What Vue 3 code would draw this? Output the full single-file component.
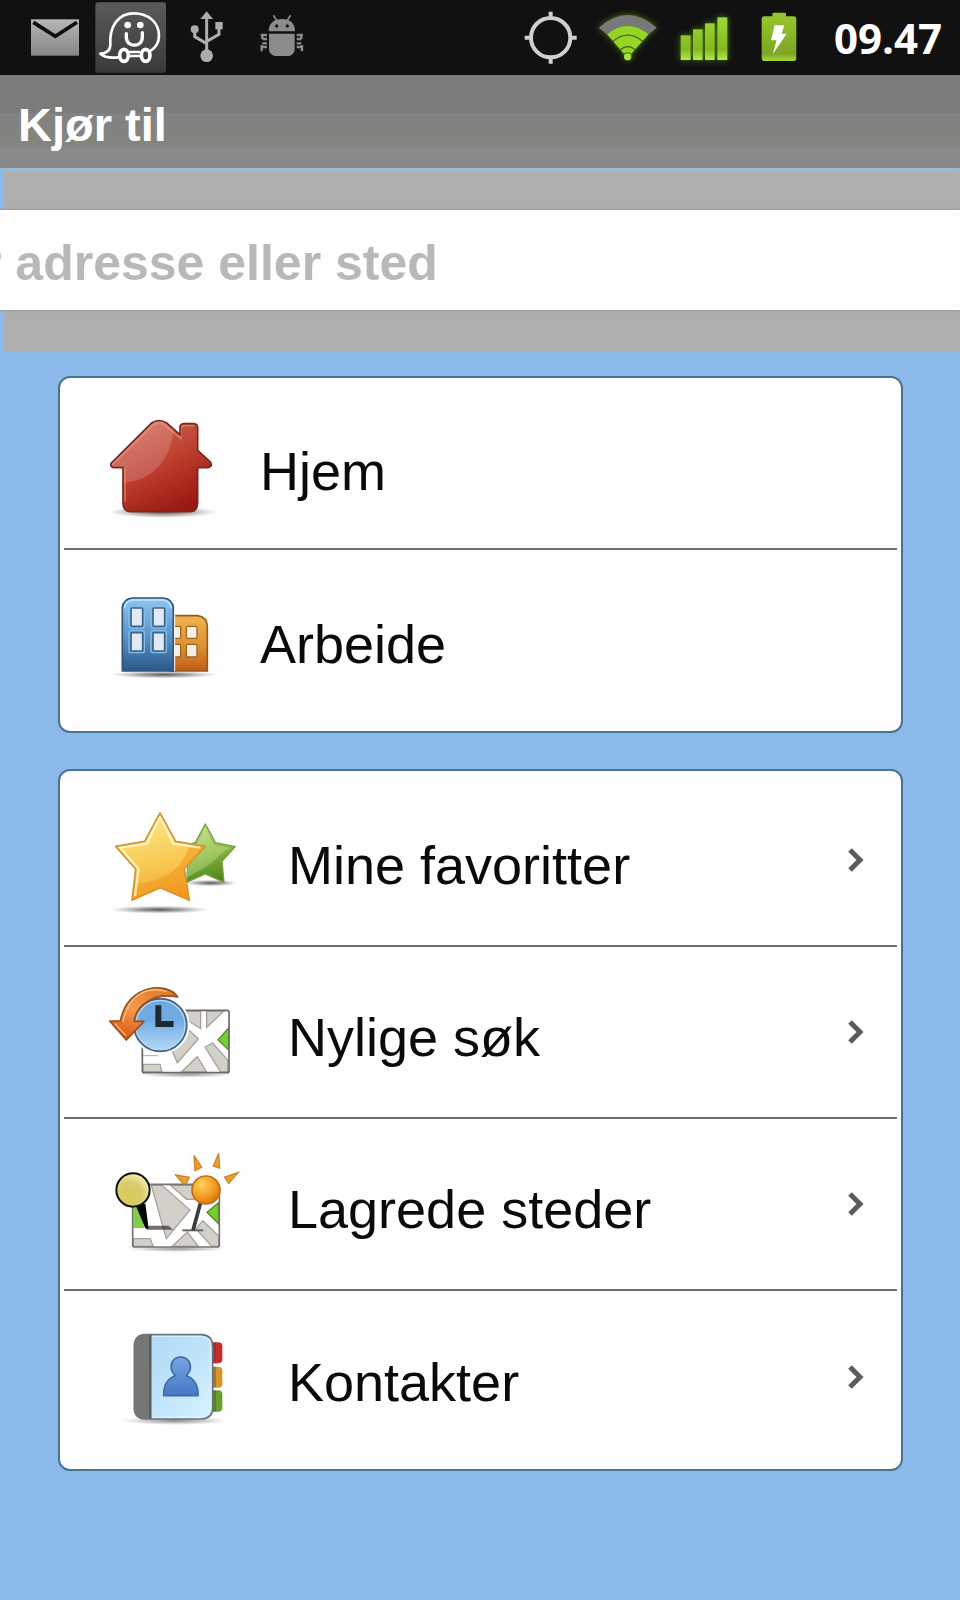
<script setup>
const places = ['Hjem', 'Arbeide']
const lists = ['Mine favoritter', 'Nylige søk', 'Lagrede steder', 'Kontakter']
</script>

<template>
  <div class="screen">
    <header class="status">
      <div class="status-group">
        <svg class="w48" viewBox="94 0 144 225" aria-hidden="true">
          <defs>
            <linearGradient id="mail" x1="0" y1="0" x2="0" y2="1">
              <stop offset="0" stop-color="#b5b5b5" /><stop offset="1" stop-color="#868686" />
            </linearGradient>
          </defs>
          <rect x="94" y="58" width="144" height="109" fill="url(#mail)" />
          <path d="M101 67L167 109L232 67" fill="none" stroke="#0c0c0c" stroke-width="11" />
        </svg>
        <svg class="w72" viewBox="288 0 216 225" aria-hidden="true">
          <defs>
            <linearGradient id="tile" x1="0" y1="0" x2="0" y2="1">
              <stop offset="0" stop-color="#5a5a5a" /><stop offset="1" stop-color="#3a3a3a" />
            </linearGradient>
          </defs>
          <rect x="289" y="7" width="212" height="211" rx="8" fill="url(#tile)" />
          <g fill="none" stroke="#fff" stroke-width="9" stroke-linecap="round" stroke-linejoin="round">
            <path d="M358 172C338 174 316 172 304 161C322 160 333 153 334 137C330 78 358 40 405 40C449 40 480 68 480 107C480 128 471 142 454 153M393 156H421M393 168H421" stroke-width="8" />
            <ellipse cx="375" cy="166" rx="13" ry="18" stroke-width="11" />
            <ellipse cx="440" cy="166" rx="13" ry="18" stroke-width="11" />
            <path d="M382 101V112C382 143 430 143 430 112V98" stroke-width="10" />
          </g>
          <circle cx="386" cy="75" r="10" fill="#fff" /><circle cx="424" cy="75" r="10" fill="#fff" />
        </svg>
        <svg class="w48" viewBox="552 0 144 225" aria-hidden="true">
          <g fill="#adadad">
            <path d="M623 34L642 57H604Z" /><circle cx="623" cy="167" r="19" />
            <circle cx="587" cy="88" r="12" /><rect x="649" y="66" width="22" height="22" />
          </g>
          <g fill="none" stroke="#adadad" stroke-width="9">
            <path d="M623 52V160M587 95V110L623 131M660 85V103L623 124" />
          </g>
        </svg>
        <svg class="w72" viewBox="744 0 216 225" aria-hidden="true">
          <g fill="#8c8c8c">
            <path d="M809 94C809 70 824 57 849 57S888 70 888 94Z" />
            <path d="M810 101H887V147C887 160 878 168 866 168H832C820 168 810 160 810 147Z" />
          </g>
          <path d="M823 46L833 61M875 46L865 61" fill="none" stroke="#8c8c8c" stroke-width="5" />
          <path d="M785 105H804M790 102V117M790 117H804M790 130H804M788 135V154M788 141H804M912 105H893M907 102V117M907 117H893M907 130H893M909 135V154M909 141H893" fill="none" stroke="#8c8c8c" stroke-width="7" />
          <circle cx="833" cy="78" r="5" fill="#151515" /><circle cx="865" cy="78" r="5" fill="#151515" />
        </svg>
      </div>
      <div class="status-group">
        <svg class="w64" viewBox="60 0 192 225" aria-hidden="true">
          <g fill="none" stroke="#cfcfcf" stroke-width="12">
            <circle cx="152" cy="113" r="59" />
            <path d="M152 35V54M152 172V191M74 113H93M211 113H230" />
          </g>
        </svg>
        <svg class="w72 glow" viewBox="276 0 216 225" aria-hidden="true">
          <path d="M296 83Q383 7 470 83L446 103Q383 53 321 103Z" fill="#787878" />
          <path d="M321 103Q383 53 446 103L391 165H375Z" fill="#96d528" />
          <circle cx="383" cy="170" r="11" fill="#a6e53a" />
          <path d="M339 124Q383 87 428 124M361 149Q383 131 406 149" fill="none" stroke="#3d6410" stroke-width="4" />
          <path d="M372 161Q383 155 394 161" fill="none" stroke="#3d6410" stroke-width="3" />
        </svg>
        <svg class="w64 glow" viewBox="516 0 192 225" aria-hidden="true">
          <defs>
            <linearGradient id="bars" gradientUnits="userSpaceOnUse" x1="0" y1="50" x2="0" y2="180">
              <stop offset="0" stop-color="#9edb36" /><stop offset="0.75" stop-color="#83b91f" /><stop offset="1" stop-color="#b2e94c" />
            </linearGradient>
          </defs>
          <g fill="url(#bars)">
            <rect x="542" y="106" width="30" height="74" /><rect x="579" y="88" width="29" height="92" />
            <rect x="615" y="70" width="29" height="110" /><rect x="652" y="52" width="30" height="128" />
          </g>
        </svg>
        <svg class="w72" viewBox="732 0 216 225" aria-hidden="true">
          <defs>
            <linearGradient id="cell" x1="0" y1="0" x2="0" y2="1">
              <stop offset="0" stop-color="#96c92d" /><stop offset="0.85" stop-color="#7da524" /><stop offset="1" stop-color="#a6da3e" />
            </linearGradient>
          </defs>
          <path d="M817 49V42Q817 38 822 38H853Q858 38 858 42V49H881Q889 49 889 57V175Q889 183 881 183H793Q785 183 785 175V57Q785 49 793 49Z" fill="url(#cell)" />
          <path d="M824 76H853L845 101H860L818 163L830 121H813Z" fill="#fff" />
        </svg>
        <time class="clock">09.47</time>
      </div>
    </header>

    <h1 class="title">Kjør til</h1>

    <form class="search" @submit.prevent>
      <input class="search-field" type="text" placeholder="r adresse eller sted" aria-label="adresse eller sted" />
    </form>

    <main class="content">
      <nav class="card">
        <a v-for="(name, i) in places" :key="name" class="row" href="#">
          <svg v-if="i === 0" class="icon" viewBox="45 -6 420 390" aria-hidden="true">
            <defs>
              <linearGradient id="roof" x1="0.2" y1="0" x2="0.75" y2="1">
                <stop offset="0" stop-color="#cf6a55" /><stop offset="0.5" stop-color="#bd3e2e" /><stop offset="1" stop-color="#96150f" />
              </linearGradient>
              <radialGradient id="shade">
                <stop offset="0" stop-color="#444" stop-opacity="0.9" /><stop offset="0.5" stop-color="#777" stop-opacity="0.6" /><stop offset="1" stop-color="#999" stop-opacity="0" />
              </radialGradient>
              <clipPath id="house-clip">
                <path d="M63 190L185 69Q207 54 230 69L270 104V80Q272 71 283 71H312Q323 72 323 84V151L362 187Q368 201 353 203H323V310Q322 335 299 335H125Q99 335 99 310V203H72Q60 201 63 190Z" />
              </clipPath>
            </defs>
            <ellipse cx="218" cy="336" rx="165" ry="18" fill="url(#shade)" />
            <path d="M63 190L185 69Q207 54 230 69L270 104V80Q272 71 283 71H312Q323 72 323 84V151L362 187Q368 201 353 203H323V310Q322 335 299 335H125Q99 335 99 310V203H72Q60 201 63 190Z" fill="url(#roof)" />
            <g clip-path="url(#house-clip)">
              <path d="M50 40H245C270 145 200 245 99 248H50Z" fill="#fff" opacity="0.17" />
              <path d="M66 194L190 75Q207 64 225 75L272 115V86Q273 77 283 77H312M105 205V306" fill="none" stroke="#f09a86" stroke-width="5" opacity="0.6" />
            </g>
            <path d="M63 190L185 69Q207 54 230 69L270 104V80Q272 71 283 71H312Q323 72 323 84V151L362 187Q368 201 353 203H323V310Q322 335 299 335H125Q99 335 99 310V203H72Q60 201 63 190Z" fill="none" stroke="#792820" stroke-width="5" />
          </svg>
          <svg v-else class="icon" viewBox="45 -30 420 390" aria-hidden="true">
            <defs>
              <linearGradient id="tower" x1="0" y1="0" x2="0" y2="1">
                <stop offset="0" stop-color="#8ec5f2" /><stop offset="0.5" stop-color="#5e96ca" /><stop offset="1" stop-color="#285989" />
              </linearGradient>
              <linearGradient id="annex" x1="0" y1="0" x2="0" y2="1">
                <stop offset="0" stop-color="#f0b44d" /><stop offset="0.6" stop-color="#dd8c2e" /><stop offset="1" stop-color="#bd5c16" />
              </linearGradient>
            </defs>
            <ellipse cx="222" cy="281" rx="162" ry="11" fill="url(#shade)" />
            <path d="M240 104H322Q352 108 352 138V270H240Z" fill="url(#annex)" stroke="#915a1e" stroke-width="5" />
            <g fill="#f5efe2" stroke="#9b6524" stroke-width="4">
              <rect x="245" y="136" width="27" height="36" rx="4" /><rect x="289" y="136" width="32" height="36" rx="4" />
              <rect x="245" y="190" width="27" height="38" rx="4" /><rect x="289" y="190" width="32" height="38" rx="4" />
            </g>
            <path d="M97 270V80Q100 54 126 51H221Q247 54 250 80V270Z" fill="url(#tower)" stroke="#2e557b" stroke-width="5" stroke-linejoin="round" />
            <path d="M103 82Q106 60 128 57H219Q241 60 244 82" fill="none" stroke="#c4e3fb" stroke-width="4" />
            <path d="M254 90V270" stroke="#fff" stroke-width="3" />
            <g fill="none" stroke="#86bde9" stroke-width="4">
              <rect x="117" y="75" width="46" height="66" rx="6" /><rect x="183" y="75" width="46" height="66" rx="6" />
              <rect x="117" y="149" width="46" height="66" rx="6" /><rect x="183" y="149" width="46" height="66" rx="6" />
            </g>
            <g fill="#e1e9f6" stroke="#36658f" stroke-width="5">
              <rect x="123" y="81" width="35" height="55" rx="3" /><rect x="189" y="81" width="35" height="55" rx="3" />
              <rect x="123" y="155" width="35" height="55" rx="3" /><rect x="189" y="155" width="35" height="55" rx="3" />
            </g>
          </svg>
          <span class="label">{{ name }}</span>
        </a>
      </nav>

      <nav class="card card-wide">
        <a v-for="(name, i) in lists" :key="name" class="row" href="#">
          <svg v-if="i === 0" class="icon" viewBox="45 12 420 390" aria-hidden="true">
            <defs>
              <linearGradient id="gold" x1="0.3" y1="0" x2="0.6" y2="1">
                <stop offset="0" stop-color="#fbe98c" /><stop offset="0.6" stop-color="#f8c850" /><stop offset="1" stop-color="#f09c2b" />
              </linearGradient>
              <linearGradient id="leaf" x1="0.3" y1="0" x2="0.6" y2="1">
                <stop offset="0" stop-color="#c0e080" /><stop offset="0.55" stop-color="#85b540" /><stop offset="1" stop-color="#4c8319" />
              </linearGradient>
              <clipPath id="gold-clip"><path d="M210 66L257 151L346 166L283 234L298 328L211 290L126 328L137 234L77 166L164 151Z" /></clipPath>
            </defs>
            <ellipse cx="362" cy="276" rx="82" ry="10" fill="url(#shade)" />
            <path d="M346 99L376 155L436 167L396 211L402 274L346 249L290 274L294 211L256 167L316 155Z" fill="url(#leaf)" stroke="#7c9c49" stroke-width="4" stroke-linejoin="round" />
            <path d="M346 112L371 161L426 171C390 178 377 220 315 245L290 260L294 211Z" fill="#e5f4b4" opacity="0.3" />
            <ellipse cx="208" cy="356" rx="150" ry="12" fill="url(#shade)" />
            <path d="M210 66L257 151L346 166L283 234L298 328L211 290L126 328L137 234L77 166L164 151Z" fill="url(#gold)" />
            <g clip-path="url(#gold-clip)">
              <path d="M300 150C285 225 235 275 130 278V340H360V150Z" fill="#f29418" opacity="0.5" />
              <path d="M210 76L250 158L330 170M210 76L171 158L90 170L146 234L135 315" fill="none" stroke="#fffadb" stroke-width="7" opacity="0.8" />
            </g>
            <path d="M210 66L257 151L346 166L283 234L298 328L211 290L126 328L137 234L77 166L164 151Z" fill="none" stroke="#d6952c" stroke-width="5" stroke-linejoin="round" />
          </svg>

          <svg v-else-if="i === 1" class="icon" viewBox="45 -9 420 390" aria-hidden="true">
            <defs>
              <linearGradient id="face" x1="0" y1="0" x2="0" y2="1">
                <stop offset="0" stop-color="#6faade" /><stop offset="0.4" stop-color="#70ace4" /><stop offset="1" stop-color="#b3daf8" />
              </linearGradient>
              <linearGradient id="arrow" x1="0.8" y1="0" x2="0.2" y2="1">
                <stop offset="0" stop-color="#dc7a28" /><stop offset="0.5" stop-color="#f39a50" /><stop offset="1" stop-color="#d9500e" />
              </linearGradient>
            </defs>
            <ellipse cx="290" cy="314" rx="148" ry="9" fill="url(#shade)" opacity="0.6" />
            <rect x="157" y="121" width="260" height="187" rx="6" fill="#fff" />
            <path d="M290 123H332V176L290 150ZM350 123H402L350 172ZM260 205L300 183L325 207L262 278L248 246ZM274 306L322 260L350 306ZM345 231L368 219L413 270V306H392ZM159 283H210L216 306H159Z" fill="#d3d0ca" stroke="#a6a39d" stroke-width="4" />
            <path d="M416 174V240L384 209Z" fill="#70d32b" stroke="#63803f" stroke-width="4" />
            <path d="M159 257H205" stroke="#aaa" stroke-width="3" />
            <rect x="157" y="121" width="260" height="187" rx="6" fill="none" stroke="#696969" stroke-width="5" />
            <circle cx="211" cy="165" r="88" fill="#fff" />
            <circle cx="211" cy="165" r="79" fill="url(#face)" stroke="#48637d" stroke-width="6" />
            <circle cx="211" cy="165" r="74" fill="none" stroke="#b6d7f1" stroke-width="4" />
            <path d="M205 106V162H251" fill="none" stroke="#1e2932" stroke-width="18" />
            <path d="M263 81C233 34 113 40 91 153H59L109 210L162 154H133C137 105 194 66 263 81Z" fill="url(#arrow)" stroke="#98501f" stroke-width="5" stroke-linejoin="round" />
            <path d="M99 156C114 73 173 47 230 65M74 160L108 197" fill="none" stroke="#ffbe72" stroke-width="4" />
          </svg>

          <svg v-else-if="i === 2" class="icon" viewBox="45 -3 420 390" aria-hidden="true">
            <defs>
              <radialGradient id="lemon" cx="0.4" cy="0.65" r="0.65">
                <stop offset="0" stop-color="#d7c952" /><stop offset="0.6" stop-color="#d8ce70" /><stop offset="1" stop-color="#f1ebb0" />
              </radialGradient>
              <radialGradient id="sun" cx="0.35" cy="0.3" r="0.75">
                <stop offset="0" stop-color="#ffd15b" /><stop offset="0.6" stop-color="#f39d21" /><stop offset="1" stop-color="#d87508" />
              </radialGradient>
            </defs>
            <ellipse cx="260" cy="327" rx="153" ry="9" fill="url(#shade)" opacity="0.6" />
            <rect x="128" y="133" width="260" height="188" rx="6" fill="#fff" />
            <path d="M184 136H216L300 210L229 296ZM242 136H365L326 178H290ZM130 296H181L189 319H130ZM247 319L292 276L325 319ZM318 266L338 242L386 288V319H365Z" fill="#d3d0ca" stroke="#a6a39d" stroke-width="4" />
            <path d="M130 205L146 200L164 264H130Z" fill="#82ce4b" />
            <path d="M386 188V252L351 217Z" fill="#6fd128" stroke="#63803f" stroke-width="4" />
            <rect x="128" y="133" width="260" height="188" rx="6" fill="none" stroke="#747474" stroke-width="5" />
            <path d="M165 257H235L250 269H170Z" fill="#222" opacity="0.65" />
            <path d="M139 194L168 263H173L164 194Z" fill="#050505" stroke="#050505" stroke-width="5" />
            <circle cx="129" cy="150" r="50" fill="url(#lemon)" stroke="#11110d" stroke-width="6" />
            <path d="M277 271H340" stroke="#666" stroke-width="6" />
            <path d="M333 184L309 271" stroke="#3b3b3b" stroke-width="11" />
            <circle cx="348" cy="150" r="42" fill="url(#sun)" stroke="#bd701c" stroke-width="5" />
            <path d="M257 105L298 112L288 132L279 130ZM312 46L335 82L315 92ZM386 40L389 84L370 78ZM445 97L416 130L404 111Z" fill="#eaa02c" stroke="#cf842a" stroke-width="4" />
          </svg>

          <svg v-else class="icon" viewBox="45 6 420 390" aria-hidden="true">
            <defs>
              <linearGradient id="page" x1="0" y1="0" x2="1" y2="1">
                <stop offset="0" stop-color="#aed9f6" /><stop offset="0.5" stop-color="#bee2fa" /><stop offset="1" stop-color="#d7f3ff" />
              </linearGradient>
              <linearGradient id="person" x1="0" y1="0" x2="0" y2="1">
                <stop offset="0" stop-color="#78a4e3" /><stop offset="1" stop-color="#4778c6" />
              </linearGradient>
            </defs>
            <ellipse cx="255" cy="332" rx="160" ry="13" fill="url(#shade)" opacity="0.7" />
            <rect x="348" y="97" width="49" height="63" rx="12" fill="#c92b2d" />
            <rect x="348" y="170" width="49" height="63" rx="12" fill="#d4952b" />
            <rect x="348" y="241" width="49" height="64" rx="12" fill="#6b9d2c" />
            <path d="M367 96H378V160H367ZM367 170H378V232H367ZM367 241H378V305H367Z" fill="#42422b" opacity="0.35" />
            <path d="M165 74H335Q368 76 368 109V294Q368 325 335 327H165Q133 325 133 294V109Q133 76 165 74Z" fill="url(#page)" stroke="#6a7478" stroke-width="5" />
            <path d="M183 74V327H165Q133 325 133 294V109Q133 76 165 74Z" fill="#747774" />
            <path d="M181 75V326" stroke="#565b5e" stroke-width="7" />
            <path d="M187 79H334Q362 82 362 108V293Q362 320 334 322H187" fill="none" stroke="#e0f5ff" stroke-width="3" />
            <path d="M221 257C220 226 232 206 256 197C234 177 242 142 272 141C302 142 311 177 289 197C314 206 325 226 324 257Z" fill="url(#person)" stroke="#426aa2" stroke-width="5" stroke-linejoin="round" />
          </svg>
          <span class="label">{{ name }}</span>
          <svg class="chevron" viewBox="0 0 16 26" aria-hidden="true">
            <path d="M2 3L12 13L2 23" fill="none" stroke="#5c5c5c" stroke-width="5" />
          </svg>
        </a>
      </nav>
    </main>
  </div>
</template>

<style>
body {
  background: #8ab9ea;
}
</style>

<style scoped>
.screen {
  min-height: 100vh;
  background: #8ab9ea;
  font-family: "Liberation Sans", Arial, sans-serif;
}

.status {
  display: flex;
  justify-content: space-between;
  height: 75px;
  padding: 0 18px 0 31px;
  background: #111;
}

.status-group {
  display: flex;
  align-items: center;
  gap: 8px;
}

.status-group:first-child {
  gap: 16px;
}

.status svg {
  display: block;
  height: 75px;
}

.w48 {
  width: 48px;
}

.w64 {
  width: 64px;
}

.w72 {
  width: 72px;
}

.glow {
  filter: drop-shadow(0 0 3px #4c7a10);
}

.clock {
  margin-left: 10px;
  color: #fff;
  font: bold 42px "Open Sans", sans-serif;
}

.title {
  box-sizing: border-box;
  min-height: 93px;
  margin: 0;
  padding: 22px 18px 15px;
  background: linear-gradient(#7c7c7c, #7b7b79 40%, #838383 42%, #828282 58%, #82857d 60%, #83857f 76%, #8b8a8a 80%, #888);
  color: #fff;
  font-size: 47px;
  line-height: 56px;
}

.search {
  padding: 38px 0 41px;
  border-top: 4px solid #9db9d6;
  background: linear-gradient(#afafaf, #afafaf) 3px 0 / calc(100% - 4px) 100% no-repeat;
}

.search-field {
  display: block;
  box-sizing: border-box;
  width: 100%;
  height: 100px;
  padding: 6px 0 0;
  border: 0;
  border-radius: 0;
  outline: 0;
  background: #fefefe;
  box-shadow: 0 0 3px #888;
  color: #222;
  font: bold 50px "Liberation Sans", Arial, sans-serif;
  text-indent: -18px;
}

.search-field::placeholder {
  color: #b8b8b8;
  opacity: 1;
}

.content {
  display: grid;
  gap: 36px;
  padding: 25px 57px 40px 58px;
}

.card {
  padding: 0 4px 9px;
  border: 2px solid #47748f;
  border-radius: 12px;
  background: #fefefe;
}

.card-wide {
  padding: 4px 4px 6px;
}

.row {
  display: flex;
  align-items: center;
  box-sizing: border-box;
  min-height: 172px;
  padding: 0 33px 0 41px;
  border-bottom: 2px solid #6e6e6e;
  color: #0a0a0a;
  text-decoration: none;
}

.row:last-child {
  border-bottom: 0;
}

.icon {
  flex: none;
  width: 140px;
  height: 130px;
}

.label {
  flex: 1;
  padding: 16px 0 0 15px;
  font-size: 54px;
  line-height: 64px;
}

.card-wide .label {
  padding: 10px 0 0 43px;
}

.chevron {
  flex: none;
  width: 16px;
  height: 26px;
}
</style>
